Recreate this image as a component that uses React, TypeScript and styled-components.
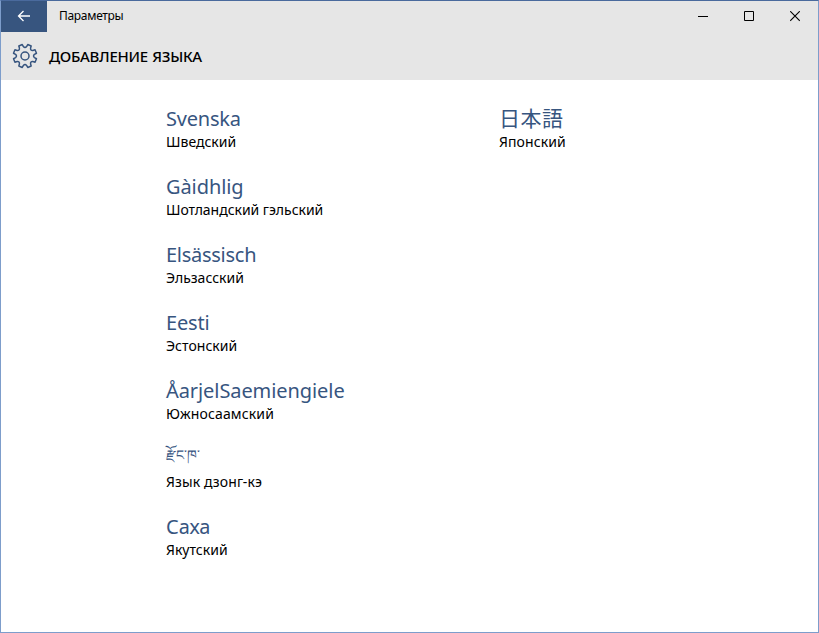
import React from 'react';
import styled, { createGlobalStyle } from 'styled-components';

const Global = createGlobalStyle`
  *, *::before, *::after { box-sizing: border-box; }
  html, body { margin: 0; padding: 0; background: #fff; }
  body { font-family: "Noto Sans", "Open Sans", "Noto Sans CJK JP", sans-serif; color: #000; }
`;

const Window = styled.div`
  width: 819px;
  height: 633px;
  background: #fff;
  border: 1px solid #7d9dcb;
  border-top-color: #4a6a9d;
  overflow: hidden;
`;

const Header = styled.header`
  height: 79px;
  background: #e6e6e6;
`;

const TitleBar = styled.div`
  display: flex;
  height: 31px;
`;

const BackButton = styled.button`
  width: 46px;
  height: 31px;
  padding: 0 0 1px;
  border: 0;
  background: #37557f;
  display: flex;
  align-items: center;
  justify-content: center;
`;

const WindowTitle = styled.span`
  flex: 1;
  padding-left: 12px;
  font-size: 12px;
  line-height: 30px;
  letter-spacing: -0.3px;
`;

const CaptionButton = styled.button`
  width: 46px;
  height: 31px;
  padding: 0;
  border: 0;
  background: transparent;
  display: flex;
  align-items: center;
  justify-content: center;
`;

const PageHeading = styled.div`
  display: flex;
  align-items: center;
  height: 48px;
  padding-left: 11px;
`;

const Heading = styled.h1`
  margin: 0 0 0 11px;
  font-size: 15px;
  font-weight: 500;
  line-height: 20px;
  letter-spacing: -0.3px;
  word-spacing: 1px;
  white-space: nowrap;
`;

const Languages = styled.main`
  display: grid;
  grid-template-columns: 333px 300px;
  padding: 22px 0 0 165px;
`;

const Column = styled.div`
  display: flex;
  flex-direction: column;
`;

const Language = styled.div`
  height: 68px;
  white-space: nowrap;
`;

const NativeName = styled.div<{ $spacing: number; $size?: number; $line?: number }>`
  height: 30px;
  line-height: ${(p) => p.$line ?? 34}px;
  font-size: ${(p) => p.$size ?? 20}px;
  letter-spacing: ${(p) => p.$spacing}px;
  color: #37557f;
`;

const LocalName = styled.div<{ $spacing: number }>`
  height: 20px;
  line-height: 20px;
  font-size: 14px;
  letter-spacing: ${(p) => p.$spacing}px;
`;

type Entry = { native: string; local: string; ns: number; ls: number; size?: number; line?: number };

const first: Entry[] = [
  { native: 'Svenska', local: 'Шведский', ns: -0.22, ls: 0 },
  { native: 'Gàidhlig', local: 'Шотландский гэльский', ns: -0.08, ls: -0.03 },
  { native: 'Elsässisch', local: 'Эльзасский', ns: -0.27, ls: 0 },
  { native: 'Eesti', local: 'Эстонский', ns: -0.2, ls: 0.03 },
  { native: 'ÅarjelSaemiengiele', local: 'Южносаамский', ns: -0.08, ls: 0.15 },
  { native: 'རྫོང་ཁ་', local: 'Язык дзонг-кэ', ns: 0, ls: 0.13, size: 14, line: 26 },
  { native: 'Саха', local: 'Якутский', ns: 0, ls: 0 },
];

const second: Entry[] = [
  { native: '日本語', local: 'Японский', ns: 0.5, ls: 0.1, size: 21, line: 32 },
];

const teeth = 8;
const gearPath = (() => {
  const points: string[] = [];
  const step = 360 / teeth;
  const at = (deg: number, r: number) => {
    const a = ((deg - 90) * Math.PI) / 180;
    return `${(14 + r * Math.cos(a)).toFixed(2)} ${(14 + r * Math.sin(a)).toFixed(2)}`;
  };
  for (let i = 0; i < teeth; i++) {
    const c = (i + 0.5) * step;
    points.push(`${i ? 'L' : 'M'}${at(c - 9, 11.8)} L${at(c + 9, 11.8)} L${at(c + 13, 9.6)} Q${at(c + 22.5, 7.6)} ${at(c + 32, 9.6)}`);
  }
  return points.join(' ') + 'Z';
})();

const List = ({ items }: { items: Entry[] }) => (
  <Column>
    {items.map((l) => (
      <Language key={l.local}>
        <NativeName $spacing={l.ns} $size={l.size} $line={l.line}>{l.native}</NativeName>
        <LocalName $spacing={l.ls}>{l.local}</LocalName>
      </Language>
    ))}
  </Column>
);

export default function App() {
  return (
    <>
      <Global />
      <Window>
        <Header>
          <TitleBar>
            <BackButton aria-label="Назад">
              <svg width="14" height="12" viewBox="0 0 14 12" fill="none" stroke="#fff" strokeWidth="1.3">
                <path d="M13 6H1.5M6.5 1L1.5 6L6.5 11" />
              </svg>
            </BackButton>
            <WindowTitle>Параметры</WindowTitle>
            <CaptionButton aria-label="Свернуть">
              <svg width="10" height="11" viewBox="0 0 10 11"><path d="M0 5.5H10" stroke="#000" /></svg>
            </CaptionButton>
            <CaptionButton aria-label="Развернуть">
              <svg width="10" height="11" viewBox="0 0 10 11"><path d="M.5 .5H9.5V9.5H.5Z" stroke="#000" fill="none" /></svg>
            </CaptionButton>
            <CaptionButton aria-label="Закрыть">
              <svg width="10" height="11" viewBox="0 0 10 11"><path d="M.2 .2L9.8 9.8M9.8 .2L.2 9.8" stroke="#000" strokeWidth="1.1" /></svg>
            </CaptionButton>
          </TitleBar>
          <PageHeading>
            <svg width="26" height="26" viewBox="1 1 26 26" fill="none" stroke="#37557f" strokeWidth="1.5" strokeLinejoin="round">
              <path d={gearPath} />
              <circle cx="14" cy="14" r="4" />
            </svg>
            <Heading>ДОБАВЛЕНИЕ ЯЗЫКА</Heading>
          </PageHeading>
        </Header>
        <Languages>
          <List items={first} />
          <List items={second} />
        </Languages>
      </Window>
    </>
  );
}
